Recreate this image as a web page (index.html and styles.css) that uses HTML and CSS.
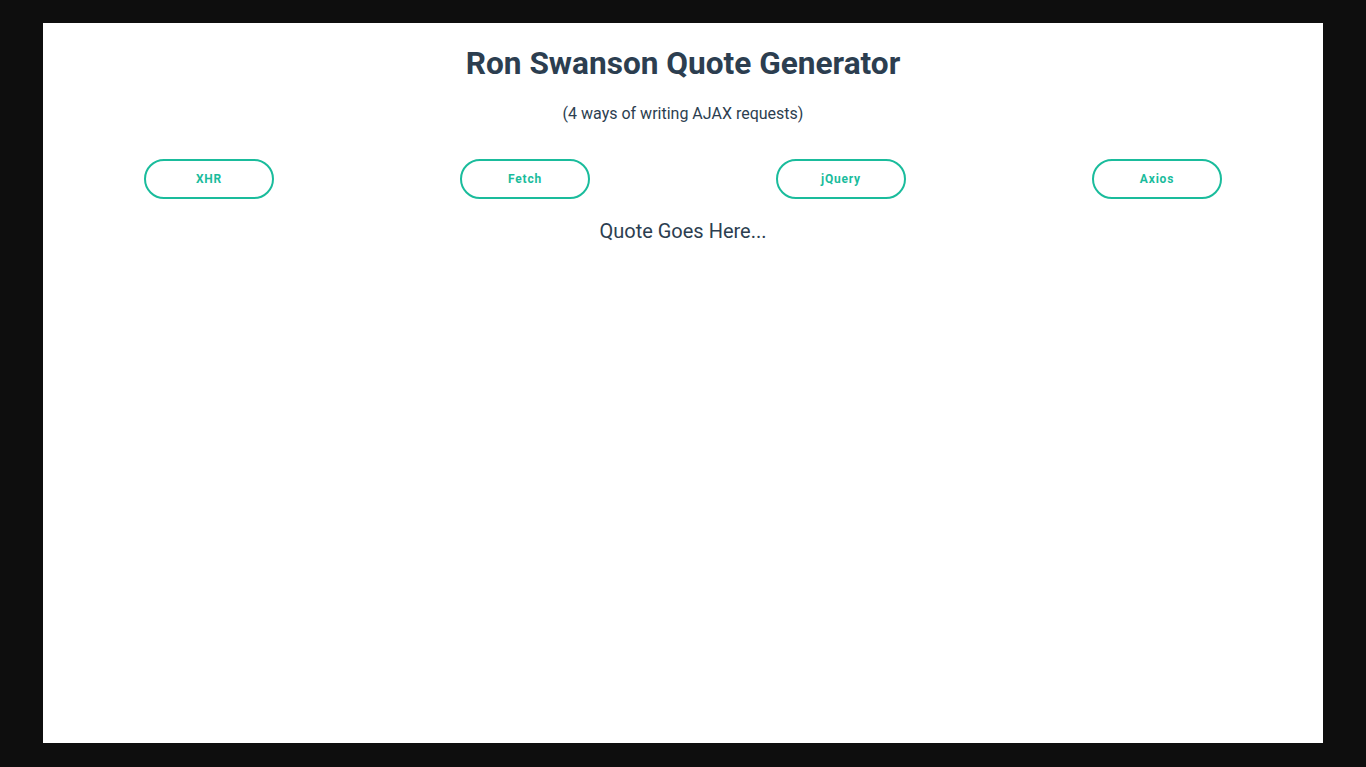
FILE: index.html
```html
<!DOCTYPE html>
<html>
<head>
<meta charset="utf-8">
<link rel="stylesheet" href="styles.css">
</head>
<body>
<div class="page">
  <h1 class="title">Ron Swanson Quote Generator</h1>
  <p class="subtitle">(4 ways of writing AJAX requests)</p>
  <div class="buttons">
    <button class="btn">XHR</button>
    <button class="btn">Fetch</button>
    <button class="btn">jQuery</button>
    <button class="btn">Axios</button>
  </div>
  <p class="quote">Quote Goes Here...</p>
</div>
</body>
</html>
```
FILE: styles.css
```css
html, body {
  margin: 0;
  padding: 0;
  height: 100%;
}
body {
  background: #0e0e0e;
  display: flex;
  align-items: center;
  justify-content: center;
  font-family: Roboto, "Liberation Sans", sans-serif;
  color: #2c3e50;
}
.page {
  width: 1280px;
  height: 720px;
  background: #fff;
  box-sizing: border-box;
  padding: 0 8px;
  text-align: center;
  margin-top: -1px;
}
.title {
  font-size: 31.6px;
  font-weight: 700;
  margin: 22px 0 0;
  line-height: 38px;
}
.subtitle {
  font-size: 16px;
  margin: 21px 0 0;
  line-height: 19px;
}
.buttons {
  display: flex;
  justify-content: space-around;
  margin-top: 36px;
}
.btn {
  width: 130px;
  height: 40px;
  border: 2px solid #1abc9c;
  border-radius: 20px;
  background: #fff;
  color: #1abc9c;
  font-family: Roboto, "Liberation Sans", sans-serif;
  font-size: 12px;
  font-weight: 700;
  letter-spacing: 0.8px;
  padding: 0;
}
.quote {
  font-size: 20px;
  margin: 20px 0 0;
  line-height: 24px;
}
```
